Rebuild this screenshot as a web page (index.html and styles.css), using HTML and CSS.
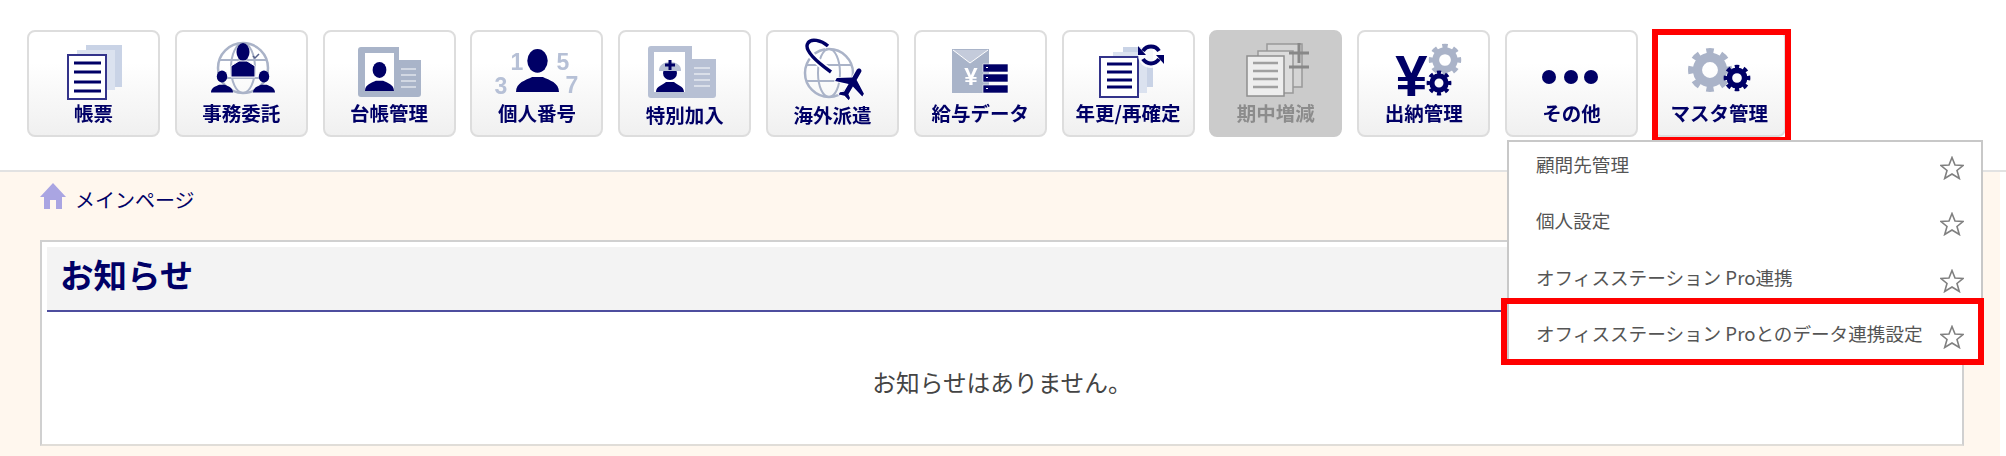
FILE: index.html
```html
<!DOCTYPE html>
<html lang="ja">
<head>
  <meta charset="UTF-8" />
  <title>メインページ</title>
  <link rel="stylesheet" href="styles.css">
</head>
<body>
  <!-- shared icon parts -->
  <svg class="sprites" aria-hidden="true">
    <symbol id="gear" viewBox="-11 -11 22 22">
      <circle r="6" fill="none" stroke="currentColor" stroke-width="4.4"/>
      <circle r="9" fill="none" stroke="currentColor" stroke-width="3" pathLength="80" stroke-dasharray="5 5" stroke-dashoffset="2.5"/>
    </symbol>
    <symbol id="person" viewBox="0 0 40 40">
      <ellipse cx="20" cy="11" rx="9.5" ry="11" fill="currentColor"/>
      <path d="M0 40 C0 31 9 29 15 26 L25 26 C31 29 40 31 40 40 Z" fill="currentColor"/>
    </symbol>
    <symbol id="star" viewBox="0 0 24 24">
      <polygon points="12,1.5 15,9 23,9.5 17,14.5 19.3,22.5 12,18 4.7,22.5 7,14.5 1,9.5 9,9" fill="none" stroke="currentColor" stroke-width="1.6"/>
    </symbol>
  </svg>

  <header class="topbar">
    <nav class="nav">
      <a class="nav-btn">
        <svg class="nav-icon" viewBox="0 0 90 66">
          <rect x="37" y="7" width="36" height="42" fill="#c9d3e6"/>
          <rect x="28" y="12" width="38" height="40" fill="#dbe2ef"/>
          <rect x="19" y="17" width="38" height="44" fill="#fff" stroke="#33338a" stroke-width="2"/>
          <path d="M25 25H52M25 34H52M25 44H52M25 53H52" stroke="#000066" stroke-width="3"/>
        </svg>
        <span class="nav-label">帳票</span>
      </a>
      <a class="nav-btn">
        <svg class="nav-icon" viewBox="0 0 90 66">
          <circle cx="47" cy="30" r="25" fill="none" stroke="#aab3c8" stroke-width="2.5"/>
          <ellipse cx="47" cy="30" rx="12" ry="25" fill="none" stroke="#aab3c8" stroke-width="2"/>
          <path d="M23 22H71M23 40H71" stroke="#aab3c8" stroke-width="2"/>
          <ellipse cx="47" cy="14" rx="6.5" ry="9" fill="#000066"/>
          <path d="M35 39V28L43 23H51L59 28V39Z" fill="#000066" stroke="#fff"/>
          <path d="M57 18l2 2 4-4" fill="none" stroke="#55608a" stroke-width="1.5"/>
          <use href="#person" x="15" y="30" width="22" height="27" color="#000066"/>
          <use href="#person" x="57" y="30" width="22" height="27" color="#000066"/>
        </svg>
        <span class="nav-label">事務委託</span>
      </a>
      <a class="nav-btn">
        <svg class="nav-icon" viewBox="0 0 90 66">
          <rect x="14" y="9" width="63" height="50" rx="3" fill="#a9b4c9"/>
          <rect x="55" y="9" width="22" height="13" fill="#fff"/>
          <rect x="21" y="15" width="29" height="38" fill="#fff"/>
          <use href="#person" x="21" y="24" width="29" height="29" color="#000066"/>
          <path d="M57 31H72M57 37H72M57 43H72M57 49H72" stroke="#dfe3ec" stroke-width="1.5"/>
        </svg>
        <span class="nav-label">台帳管理</span>
      </a>
      <a class="nav-btn">
        <svg class="nav-icon" viewBox="0 0 90 66">
          <text class="num" x="25" y="32">1</text>
          <text class="num" x="71" y="32">5</text>
          <text class="num" x="9" y="56">3</text>
          <text class="num" x="80" y="55">7</text>
          <use href="#person" x="24" y="11" width="43" height="43" color="#000066"/>
        </svg>
        <span class="nav-label">個人番号</span>
      </a>
      <a class="nav-btn">
        <svg class="nav-icon" viewBox="0 0 90 66">
          <rect x="8" y="8" width="68" height="52" rx="3" fill="#b7c0d4"/>
          <rect x="52" y="8" width="24" height="13" fill="#fff"/>
          <rect x="14" y="14" width="31" height="40" fill="#fff"/>
          <ellipse cx="30" cy="35" rx="7" ry="7" fill="#000066"/>
          <path d="M19 33C18 21 42 21 41 33Z" fill="#b7c0d4"/>
          <path d="M30 22V32M25 27H35" stroke="#000066" stroke-width="3"/>
          <path d="M16 54C16 48 23 47 26 44H34C37 47 44 48 44 54Z" fill="#000066"/>
          <path d="M54 30H70M54 36H70M54 42H70M54 48H70" stroke="#e6e9f0" stroke-width="1.5"/>
        </svg>
        <span class="nav-label low">特別加入</span>
      </a>
      <a class="nav-btn">
        <svg class="nav-icon" viewBox="0 0 90 66">
          <circle cx="42" cy="35" r="24" fill="none" stroke="#aab3c8" stroke-width="2.5"/>
          <ellipse cx="42" cy="35" rx="11" ry="24" fill="none" stroke="#aab3c8" stroke-width="2"/>
          <path d="M19 27H65M19 43H65" stroke="#aab3c8" stroke-width="2"/>
          <path d="M44 34C30 24 16 12 21 5C24 0 34 2 41 8" fill="none" stroke="#fff" stroke-width="7"/>
          <path d="M44 34C30 24 16 12 21 5C24 0 34 2 41 8" fill="none" stroke="#000066" stroke-width="3.5"/>
          <path transform="translate(65 45) rotate(30) scale(1.65) translate(-11.5 -12)" d="M21 16v-2l-8-5V3.5c0-.83-.67-1.5-1.5-1.5S10 2.67 10 3.5V9l-8 5v2l8-2.5V19l-2 1.5V22l3.5-1 3.5 1v-1.5L13 19v-5.5l8 2.5z" fill="#000066" stroke="#fff" stroke-width="1" paint-order="stroke"/>
        </svg>
        <span class="nav-label low">海外派遣</span>
      </a>
      <a class="nav-btn">
        <svg class="nav-icon" viewBox="0 0 90 66">
          <rect x="17" y="11" width="37" height="44" fill="#a9b4c9"/>
          <path d="M18 12L35 25L53 12" fill="#c4cbdb" stroke="#fff" stroke-width="1"/>
          <text class="yen-small" x="36" y="47">¥</text>
          <path d="M48 26H73V34H48ZM48 36H73V44H48ZM48 47H73V55H48Z" fill="#000066" stroke="#fff" stroke-width=".6"/>
          <path d="M51 29.5h2M51 39.5h2M51 50.5h2" stroke="#fff" stroke-width="1.2"/>
        </svg>
        <span class="nav-label">給与データ</span>
      </a>
      <a class="nav-btn">
        <svg class="nav-icon" viewBox="0 0 90 66">
          <rect x="40" y="9" width="30" height="40" fill="#c9d3e6"/>
          <rect x="30" y="14" width="34" height="41" fill="#dbe2ef"/>
          <rect x="17" y="19" width="38" height="40" fill="#fff" stroke="#33338a" stroke-width="2"/>
          <path d="M24 26H49M24 34H49M24 42H49M24 49H49" stroke="#000066" stroke-width="3"/>
          <circle cx="68" cy="17" r="13" fill="#fff" opacity=".8"/>
          <path d="M60 13A9.5 9.5 0 0 1 76 13M76 21A9.5 9.5 0 0 1 60 21" fill="none" stroke="#000066" stroke-width="4"/>
          <path d="M55 8V17H63ZM81 26V17H73Z" fill="#000066"/>
        </svg>
        <span class="nav-label">年更/再確定</span>
      </a>
      <a class="nav-btn is-disabled">
        <svg class="nav-icon" viewBox="0 0 90 66">
          <rect x="36" y="6" width="35" height="43" fill="#d4d4d4" stroke="#999" stroke-width="1.5"/>
          <rect x="27" y="13" width="35" height="42" fill="#dcdcdc" stroke="#999" stroke-width="1.5"/>
          <rect x="16" y="18" width="37" height="40" fill="#eee" stroke="#8f8f8f" stroke-width="1.5"/>
          <path d="M22 25H47M22 33H47M22 41H47M22 49H47" stroke="#a0a0a0" stroke-width="2.5"/>
          <path d="M58 15H78M68 5V25M58 29H78" stroke="#888" stroke-width="3"/>
        </svg>
        <span class="nav-label">期中増減</span>
      </a>
      <a class="nav-btn">
        <svg class="nav-icon" viewBox="0 0 90 66">
          <use href="#gear" x="49" y="5" width="34" height="34" color="#aab3c8"/>
          <use href="#gear" x="47" y="32" width="26" height="26" color="#000066"/>
        </svg>
        <span class="yen-big">¥</span>
        <span class="nav-label">出納管理</span>
      </a>
      <a class="nav-btn">
        <svg class="nav-icon" viewBox="0 0 90 66">
          <circle cx="23" cy="39" r="7" fill="#000066"/>
          <circle cx="45" cy="39" r="7" fill="#000066"/>
          <circle cx="65" cy="39" r="7" fill="#000066"/>
        </svg>
        <span class="nav-label">その他</span>
      </a>
      <a class="nav-btn is-marked">
        <svg class="nav-icon" viewBox="0 0 90 66">
          <use href="#gear" x="13" y="9" width="46" height="46" color="#aab3c8"/>
          <use href="#gear" x="49" y="26" width="28" height="28" color="#000066"/>
        </svg>
        <span class="nav-label">マスタ管理</span>
      </a>
    </nav>

    <ul class="menu">
      <li class="menu-item"><span>顧問先管理</span><svg class="star"><use href="#star"/></svg></li>
      <li class="menu-item"><span>個人設定</span><svg class="star"><use href="#star"/></svg></li>
      <li class="menu-item"><span>オフィスステーション Pro連携</span><svg class="star"><use href="#star"/></svg></li>
      <li class="menu-item is-marked"><span>オフィスステーション Proとのデータ連携設定</span><svg class="star"><use href="#star"/></svg></li>
    </ul>
  </header>

  <main class="content">
    <div class="breadcrumb">
      <svg class="home-icon" viewBox="0 0 26 26">
        <path d="M13 0L26 14H22V26H16V17H10V26H4V14H0Z"/>
      </svg>
      <a class="crumb-link">メインページ</a>
    </div>

    <section class="panel">
      <h2 class="panel-title">お知らせ</h2>
      <p class="panel-empty">お知らせはありません。</p>
    </section>
  </main>
</body>
</html>
```

FILE: styles.css
```css
/* Reset & Base */
* {
  margin: 0;
  padding: 0;
  box-sizing: border-box;
}

body {
  height: 456px;
  overflow: hidden;
  display: flex;
  flex-direction: column;
  background-color: #ffffff;
  color: #444444;
  font-family: "Noto Sans CJK JP", "Liberation Sans", sans-serif;
}

.sprites {
  display: none;
}

/* Top bar */
.topbar {
  position: relative;
  height: 172px;
  padding: 30px 0 0 27px;
  border-bottom: 2px solid #e2e2e2;
}

.nav {
  display: flex;
  gap: 14.8px;
}

.nav-btn {
  position: relative;
  width: 133px;
  height: 107px;
  padding-top: 6px;
  display: flex;
  flex-direction: column;
  align-items: center;
  background: linear-gradient(#ffffff 30%, #f0f0f0);
  border: 2px solid #dddddd;
  border-radius: 8px;
  color: #000066;
}

.nav-btn.is-disabled {
  background: #cbcbcb;
  border-color: #cbcbcb;
  color: #8c8c8c;
}

.nav-btn.is-marked::after {
  content: "";
  position: absolute;
  top: -3px;
  left: -3px;
  right: -7px;
  bottom: -8px;
  border: 6px solid #ff0000;
}

.nav-icon {
  width: 90px;
  height: 66px;
  flex: none;
  filter: blur(0.3px);
}

.nav-label {
  margin-top: -1px;
  font-size: 19.5px;
  line-height: 20px;
  font-weight: 700;
  white-space: nowrap;
  filter: blur(0.4px);
}

.nav-label.low {
  margin-top: 1px;
}

.num {
  font-family: "Liberation Sans", sans-serif;
  font-size: 23px;
  font-weight: 700;
  text-anchor: middle;
  fill: #b6c0d6;
}

.yen-small {
  font-family: "Liberation Sans", sans-serif;
  font-size: 24px;
  font-weight: 700;
  text-anchor: middle;
  fill: #ffffff;
}

/* sits over the gears of the 出納管理 icon */
.yen-big {
  position: absolute;
  top: 21px;
  left: 36px;
  font-family: "Liberation Sans", sans-serif;
  font-size: 58px;
  line-height: 46px;
  font-weight: 700;
  color: #000066;
  filter: blur(0.3px);
}

/* Dropdown menu */
.menu {
  position: absolute;
  top: 140px;
  left: 1507px;
  width: 476px;
  list-style: none;
  background-color: #ffffff;
  border: 2px solid #c8c8c8;
  border-bottom: none;
  z-index: 2;
}

.menu-item {
  position: relative;
  height: 56.3px;
  padding: 14px 17px 0 27px;
  display: flex;
  align-items: flex-start;
  justify-content: space-between;
  font-size: 18.6px;
  line-height: 20px;
  color: #555555;
  white-space: nowrap;
}

.menu-item span {
  margin-top: -2px;
}

.menu-item.is-marked {
  height: 54.3px;
}

.menu-item.is-marked::after {
  content: "";
  position: absolute;
  top: -13px;
  left: -8px;
  right: -3px;
  bottom: 0;
  border: 6px solid #ff0000;
}

.star {
  width: 24px;
  height: 24px;
  color: #808080;
}

/* Main area */
.content {
  flex: 1;
  margin-right: 6px;
  padding: 11px 36px 0 40px;
  background-color: #fff7ee;
}

.breadcrumb {
  height: 57px;
  display: flex;
  align-items: flex-start;
  gap: 9px;
}

.home-icon {
  width: 26px;
  height: 26px;
  fill: #aaa5e2;
}

.crumb-link {
  margin-top: 4px;
  font-size: 20px;
  line-height: 26px;
  color: #000066;
}

.panel {
  height: 206px;
  padding: 5px;
  background-color: #ffffff;
  border: 2px solid #d0d0d0;
  border-bottom-color: #e0ddd8;
}

.panel-title {
  height: 65px;
  padding: 0 13px 10px;
  display: flex;
  align-items: center;
  font-size: 33.5px;
  font-weight: 700;
  color: #000066;
  background-color: #f3f3f3;
  border-bottom: 2px solid #4d4d9e;
}

.panel-empty {
  margin-top: 50px;
  font-size: 23.7px;
  line-height: 40px;
  text-align: center;
  color: #444444;
}
```
